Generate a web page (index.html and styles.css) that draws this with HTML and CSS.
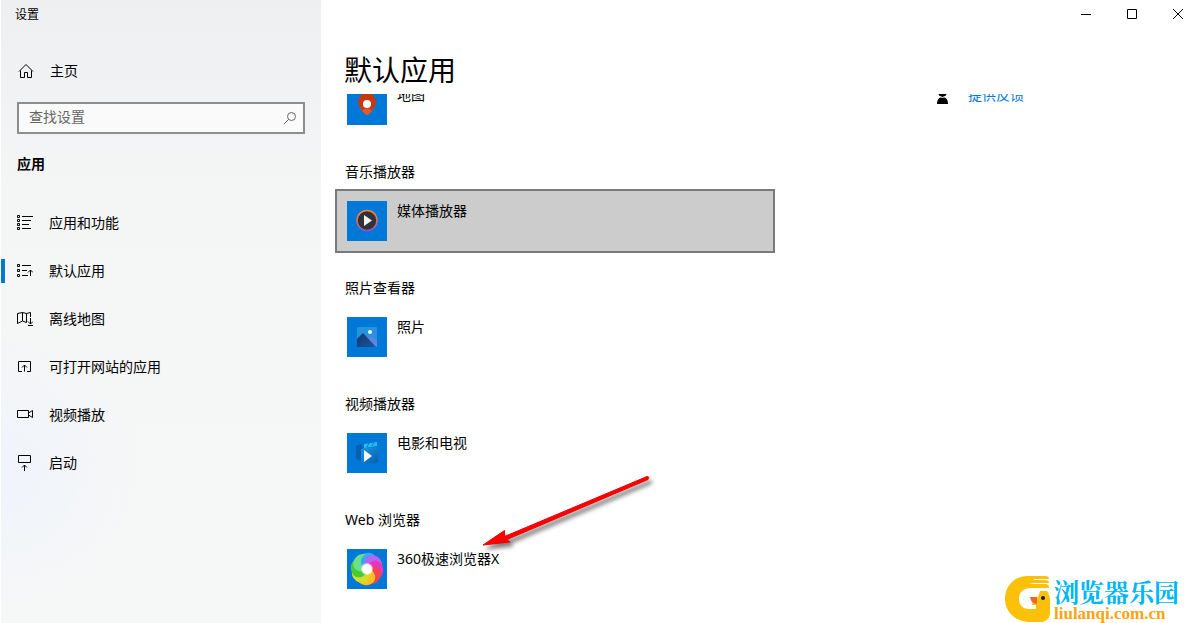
FILE: index.html
```html
<!DOCTYPE html>
<html lang="zh-CN">

<head>
    <meta charset="UTF-8">
    <meta name="viewport" content="width=device-width, initial-scale=1.0">
    <title>设置</title>
    <link rel="stylesheet" href="styles.css">
</head>

<body>
    <div class="window">
        <aside class="sidebar">
            <div class="app-name">设置</div>
            <a class="home" href="#">
                <svg class="icon" width="16" height="16" viewBox="0 0 16 16"><path d="M1 8.5 8 1.5l7 7M2.5 7.5v7h4v-5h3v5h4v-7"/></svg>
                <span>主页</span>
            </a>
            <form class="search">
                <input type="text" aria-label="查找设置" placeholder="查找设置">
                <button type="button" aria-label="搜索">
                    <svg class="icon" width="14" height="14" viewBox="0 0 14 14"><circle cx="8.5" cy="5.5" r="4"/><path d="M5.5 8.5.8 13.2"/></svg>
                </button>
            </form>
            <h2>应用</h2>
            <nav>
                <a href="#">
                    <svg class="icon" width="16" height="16" viewBox="0 0 16 16"><path d="M.5.5h2v2h-2zM.5 4.5h2v2h-2zM.5 8.5h2v2h-2zM.5 12.5h2v2h-2zM5 1.5h11M5 5.5h9M5 9.5h7M5 13.5h9"/></svg>
                    <span>应用和功能</span>
                </a>
                <a href="#" class="current">
                    <svg class="icon" width="16" height="16" viewBox="0 0 16 16"><path d="M.5 1.5h2v2h-2zM.5 6.5h2v2h-2zM.5 11.5h2v2h-2zM5 2.5h9M5 7.5h5M5 12.5h6M13.5 13V7M11 9.5 13.5 7 16 9.5"/></svg>
                    <span>默认应用</span>
                </a>
                <a href="#">
                    <svg class="icon" width="16" height="16" viewBox="0 0 16 16"><path d="M9.5 11.5 5.5 10l-5 2.500v-10l5-1 4 1 4-1V6M5.500 1.500V10M9.500 2.500v9M13.500 7v6M11 10.500l2.500 2.500 2.500-2.500M11 14.500h5"/></svg>
                    <span>离线地图</span>
                </a>
                <a href="#">
                    <svg class="icon" width="16" height="16" viewBox="0 0 16 16"><path d="M5 12.500H1.500v-10h12v10H10M7.500 12.500V6M5 8.500 7.500 6 10 8.500"/></svg>
                    <span>可打开网站的应用</span>
                </a>
                <a href="#">
                    <svg class="icon" width="16" height="16" viewBox="0 0 16 16"><path d="M.5 3.500h11v7H.5zM11.500 6l4-2.500v7l-4-2.500"/></svg>
                    <span>视频播放</span>
                </a>
                <a href="#">
                    <svg class="icon" width="16" height="16" viewBox="0 0 16 16"><path d="M1.500.5h12v7h-12zM7.500 16v-6M5 12.500 7.500 10l2.500 2.500"/></svg>
                    <span>启动</span>
                </a>
            </nav>
        </aside>

        <main>
            <div class="controls">
                <button type="button" aria-label="最小化"><svg class="icon" width="10" height="10" viewBox="0 0 10 10"><path d="M0 5.500h10"/></svg></button>
                <button type="button" aria-label="最大化"><svg class="icon" width="10" height="10" viewBox="0 0 10 10"><path d="M.5.5h9v9h-9z"/></svg></button>
                <button type="button" aria-label="关闭"><svg class="icon" width="10" height="10" viewBox="0 0 10 10"><path d="m0 0 10 10M10 0 0 10"/></svg></button>
            </div>
            <h1>默认应用</h1>
            <div class="scroller">
                <div class="apps">
                    <button type="button" class="app">
                        <svg class="tile" width="40" height="40" viewBox="0 0 40 40">
                            <defs>
                                <linearGradient id="pin" x2="0" y2="1"><stop offset="0" stop-color="#c5360c"/><stop offset=".7" stop-color="#c93b10"/><stop offset="1" stop-color="#ea5b2a"/></linearGradient>
                            </defs>
                            <path fill="url(#pin)" d="M20 30c-2 0-9-8-9-13a9 9 0 0 1 18 0c0 5-7 13-9 13z"/>
                            <path fill="#ea5928" d="M15 26q5-5 10 0l-5 4z"/>
                            <circle cx="20" cy="19" r="4" fill="#fff"/>
                        </svg>
                        <span>地图</span>
                    </button>
                    <h3>音乐播放器</h3>
                    <button type="button" class="app selected">
                        <svg class="tile" width="40" height="40" viewBox="0 0 40 40">
                            <defs>
                                <linearGradient id="ring" x2="0" y2="1"><stop offset="0" stop-color="#f5873f"/><stop offset=".5" stop-color="#d86e62"/><stop offset="1" stop-color="#9353c4"/></linearGradient>
                            </defs>
                            <circle cx="20" cy="19.500" r="10" fill="#303236" stroke="url(#ring)" stroke-width="1.600"/>
                            <path fill="#f2f2f2" d="m17 14 8 5.500-8 5.500z"/>
                        </svg>
                        <span>媒体播放器</span>
                    </button>
                    <h3>照片查看器</h3>
                    <button type="button" class="app">
                        <svg class="tile" width="40" height="40" viewBox="0 0 40 40">
                            <defs>
                                <linearGradient id="sky" x2="1" y2="1"><stop offset="0" stop-color="#1e96d8"/><stop offset="1" stop-color="#3987e8"/></linearGradient>
                                <linearGradient id="hill" x2="1" y2="1"><stop offset="0" stop-color="#173569"/><stop offset="1" stop-color="#1c55a5"/></linearGradient>
                            </defs>
                            <rect x="10" y="10" width="20" height="20" rx="1" fill="url(#sky)"/>
                            <path fill="#5f86df" d="m18 24 6-5 6 5v6H18z"/>
                            <path fill="url(#hill)" d="m10 22 6-6 13 14H10z"/>
                            <circle cx="23" cy="15" r="2" fill="#e9fbff"/>
                        </svg>
                        <span>照片</span>
                    </button>
                    <h3>视频播放器</h3>
                    <button type="button" class="app">
                        <svg class="tile" width="40" height="40" viewBox="0 0 40 40">
                            <defs>
                                <linearGradient id="film" x2="1" y2="1"><stop offset="0" stop-color="#1c9be3"/><stop offset="1" stop-color="#075caf"/></linearGradient>
                            </defs>
                            <path fill="#0760b0" d="m9 13 5-2 2 4-1 13-6-2z"/>
                            <path fill="#2db9ee" d="m17 11 13-2v4l-13 2z"/>
                            <path stroke="#087ac9" d="m22 10-2 4M27 9l-2 4"/>
                            <path fill="url(#film)" d="m14 16 4-1 13-1v15l-2 1H14z"/>
                            <path fill="#f2f6fa" d="m17 17 8 6-8 6z"/>
                        </svg>
                        <span>电影和电视</span>
                    </button>
                    <h3>Web 浏览器</h3>
                    <button type="button" class="app">
                        <svg class="tile" width="40" height="40" viewBox="0 0 40 40">
                            <defs>
                                <path id="petal" d="M16 18C12 12 14 6 20 4.500c6-1 11 2 12 7-5-3-11-1-12 4z"/>
                            </defs>
                            <use href="#petal" fill="#35a8fa" transform="rotate(-15 20 20)"/>
                            <use href="#petal" fill="#b565f0" transform="rotate(30 20 20)"/>
                            <use href="#petal" fill="#ed32bd" transform="rotate(75 20 20)"/>
                            <use href="#petal" fill="#f2464b" transform="rotate(120 20 20)"/>
                            <use href="#petal" fill="#ffc020" transform="rotate(165 20 20)"/>
                            <use href="#petal" fill="#d6dc2c" transform="rotate(210 20 20)"/>
                            <use href="#petal" fill="#4ac932" transform="rotate(255 20 20)"/>
                            <use href="#petal" fill="#6be08c" transform="rotate(300 20 20)"/>
                            <circle cx="20" cy="20" r="6" fill="#fff" opacity=".5"/>
                            <circle cx="20" cy="20" r="5" fill="#fff"/>
                        </svg>
                        <span>360极速浏览器X</span>
                    </button>
                </div>
                <a class="feedback" href="#">
                    <svg width="11" height="17" viewBox="0 0 11 17"><circle cx="5.500" cy="6" r="4"/><path d="M0 17c0-4 2-7 5.500-7S11 13 11 17z"/><path class="collar" d="M1.500 9q4 3 8 0"/></svg>
                    <span>提供反馈</span>
                </a>
            </div>
        </main>

        <svg class="arrow" width="180" height="84" viewBox="0 0 180 84">
            <path d="M11 75 32.500 60.500v6L175 6.500q3 0 1 3L35 69.500l3 2.500z"/>
        </svg>

        <div class="watermark">
            <svg width="46" height="48" viewBox="0 0 46 48">
                <path fill="#fbc109" d="M23 1h17q4 0 4 3H29v1h11q4 0 4 3H29l-5 1h16q4 0 4 3v1H26c-8 0-12 4-12 11 0 6 4 10 10 10h7v-4h-4l1-6 5-2 2-6h7q3 4 3 10v12c0 5-4 9-9 9H23C9 46 0 36 0 24 0 11 9 1 23 1z"/>
                <path fill="#ed6827" d="M25 22h7v7q-6 0-7-7z"/>
                <circle cx="38" cy="23" r="2" fill="#17201a"/>
            </svg>
            <div class="watermark-text">
                <strong>浏览器乐园</strong>
                <span>liulanqi.com.cn</span>
            </div>
        </div>
    </div>
</body>

</html>
```

FILE: styles.css
```css
* {
    box-sizing: border-box;
}

body {
    margin: 0;
    background: #fff;
    color: #000;
    font: 14px/20px "Noto Sans", "Noto Sans CJK SC", sans-serif;
}

a {
    color: inherit;
    text-decoration: none;
}

button {
    padding: 0;
    border: 0;
    background: none;
    color: inherit;
    font: inherit;
}

h1, h2, h3 {
    margin: 0;
    font-weight: normal;
}

svg {
    display: block;
    flex-shrink: 0;
}

.icon {
    fill: none;
    stroke: currentColor;
}

.window {
    position: relative;
    display: flex;
    height: 100vh;
    overflow: hidden;
}

.sidebar {
    flex: 0 0 320px;
    margin-left: 1px;
    background: radial-gradient(circle at 0 76%, #f0f4fb, transparent 140px), linear-gradient(#eeeff1, #f4f5f5 30%, #f6f7f7);
}

.app-name {
    padding: 5px 14px;
    font-size: 12px;
}

.home {
    display: flex;
    align-items: center;
    gap: 16px;
    margin-top: 21px;
    padding: 10px 17px;
}

.search {
    display: flex;
    align-items: center;
    height: 32px;
    margin: 11px 16px 0;
    border: 2px solid #8c8d8d;
    background: #fafafa;
}

.search input {
    flex: 1;
    min-width: 0;
    height: 28px;
    padding: 0 10px 4px;
    border: 0;
    outline: 0;
    background: none;
    font: inherit;
}

.search input::placeholder {
    color: #666;
}

.search button {
    padding: 0 6px;
    color: #666;
}

h2 {
    padding: 20px 16px 25px;
    font-size: 14px;
    font-weight: bold;
}

nav a {
    display: flex;
    align-items: center;
    gap: 16px;
    height: 48px;
    padding: 0 16px;
}

nav .current {
    background: linear-gradient(#0078d7, #0078d7) left / 4px 24px no-repeat;
}

main {
    flex: 1;
    display: flex;
    flex-direction: column;
    min-width: 0;
    padding-left: 14px;
}

.controls {
    display: flex;
    justify-content: flex-end;
    gap: 18px;
    height: 28px;
}

.controls button {
    display: flex;
    align-items: center;
    justify-content: center;
    width: 28px;
}

h1 {
    margin: 22px 9px 4px;
    font-size: 28px;
    line-height: 40px;
}

.scroller {
    flex: 1;
    display: flex;
    align-items: flex-start;
    gap: 162px;
    min-height: 0;
    overflow: hidden;
}

/* list is scrolled down a little, first row is cut by the header */
.apps {
    flex: 0 1 440px;
    margin-top: -21px;
}

.app {
    display: flex;
    align-items: flex-start;
    gap: 10px;
    width: 100%;
    padding: 10px;
    border: 2px solid transparent;
}

.app.selected {
    border-color: #7a7a7a;
    background: #ccc;
}

.tile {
    background: #0078d7;
}

h3 {
    padding: 25px 10px 7px;
    font-size: 14px;
}

.feedback {
    display: flex;
    align-items: center;
    gap: 20px;
    margin-top: -9px;
    color: #0078d7;
}

.feedback svg {
    fill: #000;
}

.collar {
    fill: none;
    stroke: #fff;
}

.arrow {
    position: absolute;
    left: 472px;
    top: 470px;
    fill: #f00;
    stroke: #e00;
    filter: drop-shadow(3px 4px 2px rgba(0, 0, 0, .5));
}

.watermark {
    position: absolute;
    right: 13px;
    bottom: 0;
    display: flex;
    gap: 3px;
}

.watermark-text {
    display: flex;
    flex-direction: column;
}

.watermark strong {
    color: #00b7f4;
    font: bold 25px/32px "Noto Serif CJK SC", "Noto Sans CJK SC", serif;
}

.watermark span {
    color: #fca313;
    font: bold 17px/14px "Liberation Serif", serif;
}
```
